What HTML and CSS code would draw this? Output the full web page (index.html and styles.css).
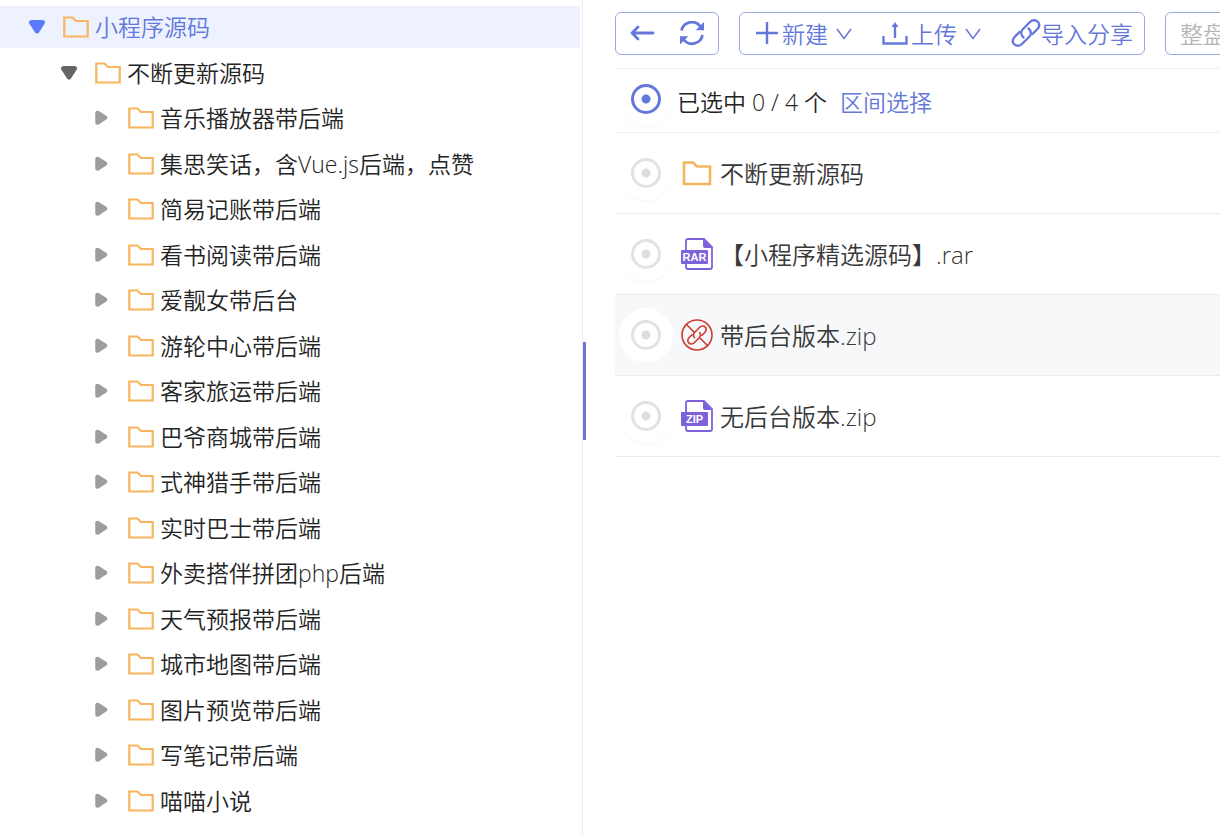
FILE: index.html
```html
<!DOCTYPE html>
<html lang="zh-CN">
<head>
<meta charset="utf-8">
<title>小程序源码</title>
<link rel="stylesheet" href="styles.css">
</head>
<body>
<svg class="sprite" aria-hidden="true">
  <symbol id="folder" viewBox="0 0 26 22"><path d="M1.3 20.500V1.500H9.500L13 5H24.700V20.500Z" fill="none" stroke="#f8b55f" stroke-width="2.200"/></symbol>
  <symbol id="down" viewBox="0 0 18 16"><path d="M3.500 3.500H14.500L9 12Z" fill="currentColor" stroke="currentColor" stroke-width="5" stroke-linejoin="round"/></symbol>
  <symbol id="right" viewBox="0 0 18 16"><path d="M4.500 3V12.500L12 7.700Z" fill="currentColor" stroke="currentColor" stroke-width="4.500" stroke-linejoin="round"/></symbol>
  <symbol id="caret" viewBox="0 0 16 12"><path d="M1 1L8 10.500L15 1" fill="none" stroke="currentColor" stroke-width="1.500"/></symbol>
</svg>
<div class="app">
  <nav class="sidebar" aria-label="目录">
    <ul class="tree">
      <li class="node node-root"><button class="toggle" aria-label="收起"><svg><use href="#down"/></svg></button><svg class="folder"><use href="#folder"/></svg><span>小程序源码</span></li>
      <li class="node node-open"><button class="toggle" aria-label="收起"><svg><use href="#down"/></svg></button><svg class="folder"><use href="#folder"/></svg><span>不断更新源码</span></li>
      <li class="node"><button class="toggle" aria-label="展开"><svg><use href="#right"/></svg></button><svg class="folder"><use href="#folder"/></svg><span>音乐播放器带后端</span></li>
      <li class="node"><button class="toggle" aria-label="展开"><svg><use href="#right"/></svg></button><svg class="folder"><use href="#folder"/></svg><span>集思笑话，含Vue.js后端，点赞</span></li>
      <li class="node"><button class="toggle" aria-label="展开"><svg><use href="#right"/></svg></button><svg class="folder"><use href="#folder"/></svg><span>简易记账带后端</span></li>
      <li class="node"><button class="toggle" aria-label="展开"><svg><use href="#right"/></svg></button><svg class="folder"><use href="#folder"/></svg><span>看书阅读带后端</span></li>
      <li class="node"><button class="toggle" aria-label="展开"><svg><use href="#right"/></svg></button><svg class="folder"><use href="#folder"/></svg><span>爱靓女带后台</span></li>
      <li class="node"><button class="toggle" aria-label="展开"><svg><use href="#right"/></svg></button><svg class="folder"><use href="#folder"/></svg><span>游轮中心带后端</span></li>
      <li class="node"><button class="toggle" aria-label="展开"><svg><use href="#right"/></svg></button><svg class="folder"><use href="#folder"/></svg><span>客家旅运带后端</span></li>
      <li class="node"><button class="toggle" aria-label="展开"><svg><use href="#right"/></svg></button><svg class="folder"><use href="#folder"/></svg><span>巴爷商城带后端</span></li>
      <li class="node"><button class="toggle" aria-label="展开"><svg><use href="#right"/></svg></button><svg class="folder"><use href="#folder"/></svg><span>式神猎手带后端</span></li>
      <li class="node"><button class="toggle" aria-label="展开"><svg><use href="#right"/></svg></button><svg class="folder"><use href="#folder"/></svg><span>实时巴士带后端</span></li>
      <li class="node"><button class="toggle" aria-label="展开"><svg><use href="#right"/></svg></button><svg class="folder"><use href="#folder"/></svg><span>外卖搭伴拼团php后端</span></li>
      <li class="node"><button class="toggle" aria-label="展开"><svg><use href="#right"/></svg></button><svg class="folder"><use href="#folder"/></svg><span>天气预报带后端</span></li>
      <li class="node"><button class="toggle" aria-label="展开"><svg><use href="#right"/></svg></button><svg class="folder"><use href="#folder"/></svg><span>城市地图带后端</span></li>
      <li class="node"><button class="toggle" aria-label="展开"><svg><use href="#right"/></svg></button><svg class="folder"><use href="#folder"/></svg><span>图片预览带后端</span></li>
      <li class="node"><button class="toggle" aria-label="展开"><svg><use href="#right"/></svg></button><svg class="folder"><use href="#folder"/></svg><span>写笔记带后端</span></li>
      <li class="node"><button class="toggle" aria-label="展开"><svg><use href="#right"/></svg></button><svg class="folder"><use href="#folder"/></svg><span>喵喵小说</span></li>
    </ul>
  </nav>
  <div class="splitter"><div class="grip"></div></div>
  <main class="panel">
    <div class="toolbar">
      <div class="group nav-group">
        <button class="tool" aria-label="返回"><svg width="26" height="18" viewBox="0 0 26 18"><path d="M9 2L3 8L9 14M3.500 8H24" fill="none" stroke="currentColor" stroke-width="2.800" stroke-linecap="round" stroke-linejoin="round"/></svg></button>
        <button class="tool" aria-label="刷新"><svg width="26" height="26" viewBox="0 0 26 26"><path d="M2.500 9.500A10.700 10.700 0 0 1 21.500 5.500M23.500 14A10.700 10.700 0 0 1 4.500 18.500" fill="none" stroke="currentColor" stroke-width="2.800"/><path d="M25 1V9.300H16.700ZM1 23.500V15.200H9.300Z" fill="currentColor"/></svg></button>
      </div>
      <div class="group file-group">
        <button class="tool"><svg width="24" height="24" viewBox="0 0 24 24"><path d="M12 0V22M1 11H23" fill="none" stroke="currentColor" stroke-width="2.400"/></svg><span>新建</span><svg class="caret"><use href="#caret"/></svg></button>
        <button class="tool"><svg width="26" height="24" viewBox="0 0 26 24"><path d="M1.500 14V21.500H24.500V14M13 16V4" fill="none" stroke="currentColor" stroke-width="2.400"/><path d="M13 0L16.500 5H9.500Z" fill="currentColor"/></svg><span>上传</span><svg class="caret"><use href="#caret"/></svg></button>
        <button class="tool"><svg width="30" height="30" viewBox="0 0 30 30"><g fill="none" stroke="currentColor" stroke-width="2.300" stroke-linecap="round"><path d="M12.500 18.500C9.500 16 9.500 12.500 12 10L19 3C21.500 .5 25 .8 27 3S28.500 8 26 10.500L21.500 15"/><path d="M17.500 9.500C20.500 12 20.500 15.500 18 18L11 25C8.500 27.500 5 27.200 3 25S1.500 20 4 17.500L8.500 13"/></g></svg><span>导入分享</span></button>
      </div>
      <input class="search" type="search" placeholder="整盘" aria-label="整盘">
    </div>
    <div class="summary">
      <label class="pick"><input type="checkbox" class="check check-all" aria-label="全选"></label>
      <span>已选中 0 / 4 个</span>
      <button class="range">区间选择</button>
    </div>
    <ul class="files">
      <li class="file"><label class="pick"><input type="checkbox" class="check" aria-label="选择 不断更新源码"></label><svg class="kind" viewBox="0 0 32 32"><path d="M3 27V5.500H12L16 9.500H29V27Z" fill="none" stroke="#f5b55f" stroke-width="2.600"/></svg><span>不断更新源码</span></li>
      <li class="file"><label class="pick"><input type="checkbox" class="check" aria-label="选择 【小程序精选源码】.rar"></label><svg class="kind" viewBox="0 0 32 32"><path d="M5 12V3Q5 1 7 1H23L31 9V29Q31 31 29 31H7Q5 31 5 29V25" fill="none" stroke="#7d62dc" stroke-width="1.800"/><path d="M22 1L31 10H24Q22 10 22 8Z" fill="#7d62dc"/><rect y="12" width="27" height="14" rx="1" fill="#7d62dc"/><text x="13.500" y="23" class="badge">RAR</text></svg><span>【小程序精选源码】.rar</span></li>
      <li class="file file-hover"><label class="pick"><input type="checkbox" class="check" aria-label="选择 带后台版本.zip"></label><svg class="kind" viewBox="0 0 32 32"><g fill="none" stroke="#cf3a31" stroke-width="1.600" stroke-linecap="round"><circle cx="16" cy="16" r="15"/><path d="M5.500 5.500L13 13M19.500 19.500L26.500 26.500M13.500 18.500C11.800 16.800 12.300 14.800 14 13L18.500 8.500C20.500 6.500 23 7 24.300 8.200S25.500 11.800 23.800 13.500L21 16.300M18.500 13.500C20.200 15.200 19.700 17.200 18 19L13.500 23.500C11.500 25.500 9 25 7.700 23.800S6.500 20.200 8.200 18.500L11 15.700"/></g></svg><span>带后台版本.zip</span></li>
      <li class="file"><label class="pick"><input type="checkbox" class="check" aria-label="选择 无后台版本.zip"></label><svg class="kind" viewBox="0 0 32 32"><path d="M5 12V3Q5 1 7 1H23L31 9V29Q31 31 29 31H7Q5 31 5 29V25" fill="none" stroke="#7d62dc" stroke-width="1.800"/><path d="M22 1L31 10H24Q22 10 22 8Z" fill="#7d62dc"/><rect y="12" width="27" height="14" rx="1" fill="#7d62dc"/><text x="13.500" y="23" class="badge">ZIP</text></svg><span>无后台版本.zip</span></li>
    </ul>
  </main>
</div>
</body>
</html>
```

FILE: styles.css
```css
* { box-sizing: border-box; }

body {
  margin: 0;
  background: #fff;
  color: #242424;
  font-family: "Open Sans", "Noto Sans CJK SC", sans-serif;
  font-size: 23px;
  font-weight: 350;
  line-height: 34px;
  overflow: hidden;
}

button, input {
  font: inherit;
  color: inherit;
}

button {
  padding: 0;
  border: 0;
  background: none;
  cursor: pointer;
}

ul {
  margin: 0;
  padding: 0;
  list-style: none;
}

svg { display: block; flex: none; }
.sprite { position: absolute; width: 0; height: 0; }

.app { display: flex; min-height: 100vh; }

.sidebar {
  flex: 0 0 582px;
  padding: 6px 2px 0 0;
}

.node {
  display: flex;
  align-items: center;
  height: 42px;
  margin-bottom: 4px;
  padding-left: 93px;
  white-space: nowrap;
}
.node:nth-child(even) { margin-bottom: 3px; }
.node-root {
  padding-left: 28px;
  background: #eef2fe;
  color: #6078dc;
}
.node-open { padding-left: 60px; }

.toggle { margin-right: 17px; color: #9b9d9e; }
.toggle svg { width: 18px; height: 16px; }
.node-root .toggle { color: #5b7cfa; }
.node-open .toggle { color: #656565; }
.folder { width: 26px; height: 22px; margin-right: 6px; }

.splitter {
  flex: none;
  width: 4px;
  padding-top: 342px;
  border-left: 1px solid #ececf0;
}
.grip { height: 98px; background: #6679d6; }

.panel {
  flex: 1;
  min-width: 0;
  padding: 12px 0 0 29px;
  overflow: hidden;
}

.toolbar {
  display: flex;
  gap: 20px;
  padding-bottom: 13px;
  color: #6478dc;
}
.group {
  display: flex;
  flex: none;
  align-items: center;
  height: 43px;
  border: 1px solid #9ba9dd;
  border-radius: 6px;
}
.nav-group { gap: 24px; padding: 0 13px; }
.file-group { gap: 30px; padding: 0 11px 0 15px; }
.tool { display: flex; align-items: center; white-space: nowrap; }
.tool span { padding: 0 0 0 3px; }
.tool:last-child span { padding-left: 0; }
.caret { width: 16px; height: 12px; margin-left: 8px; }

.search {
  flex: none;
  width: 260px;
  height: 43px;
  padding: 0 14px;
  border: 1px solid #9ba9dd;
  border-radius: 6px;
  background: #fff;
}
.search::placeholder { color: #b5b5b5; opacity: 1; }

.summary {
  display: flex;
  align-items: center;
  height: 65px;
  border: solid #eeeff1;
  border-width: 1px 0;
  white-space: nowrap;
}
.summary span { margin: 2px 13px 0 0; }
.range { padding-top: 2px; color: #6478dc; }

.pick {
  display: flex;
  flex: none;
  align-items: center;
  justify-content: center;
  width: 54px;
  height: 54px;
  margin: 0 4px;
  border-radius: 50%;
  background: #fff;
  box-shadow: 0 2px 2px #fafafb;
}
.check {
  width: 30px;
  height: 30px;
  margin: 0;
  border: 3px solid #e2e1e3;
  border-radius: 50%;
  appearance: none;
  background: radial-gradient(circle, #dfdde0 4px, transparent 5px);
}
.check-all {
  border-color: #6478dc;
  background: radial-gradient(circle, #6478dc 4px, transparent 5px);
}
.summary .pick { margin-bottom: 4px; }

.file {
  display: flex;
  align-items: center;
  height: 81px;
  border-bottom: 1px solid #eaebed;
  color: #383838;
  font-size: 24px;
  white-space: nowrap;
}
.file-hover { background: #f7f8fa; }
.kind { width: 32px; height: 32px; margin: 0 7px 0 4px; }
.file span { padding-top: 2px; }
.badge {
  fill: #fff;
  font: bold 11px "Liberation Sans", sans-serif;
  text-anchor: middle;
}
```
